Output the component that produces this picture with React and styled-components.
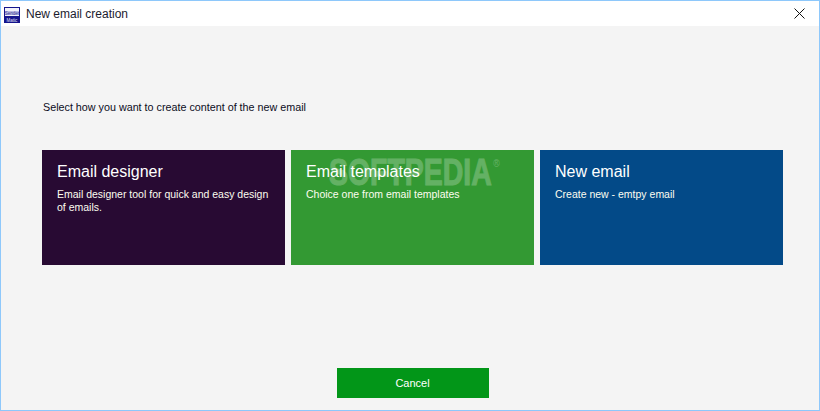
import React from 'react';
import styled, { createGlobalStyle } from 'styled-components';

const GlobalStyle = createGlobalStyle`
  html, body {
    margin: 0;
    padding: 0;
    height: 100%;
  }
  #root {
    height: 100%;
  }
  body {
    font-family: "Liberation Sans", Arial, sans-serif;
  }
`;

const Window = styled.div`
  position: relative;
  box-sizing: border-box;
  width: 820px;
  height: 411px;
  display: flex;
  flex-direction: column;
  border: 1px solid #8ec8fb;
  background: #f4f4f4;
  overflow: hidden;
`;

const TitleBar = styled.div`
  height: 25px;
  flex: none;
  display: flex;
  align-items: center;
  background: #fff;
  padding: 2px 8px 0 3px;
  box-sizing: border-box;
`;

const TitleText = styled.span`
  margin-left: 6px;
  margin-top: -2px;
  font-size: 12px;
  color: #1b1b2e;
`;

const CloseButton = styled.button`
  margin-left: auto;
  width: 24px;
  height: 24px;
  margin-top: -2px;
  padding: 0;
  border: 0;
  background: none;
  display: flex;
  align-items: center;
  justify-content: center;
`;

const Content = styled.main`
  flex: 1;
  display: flex;
  flex-direction: column;
  padding: 74px 36px 12px 41px;
`;

const Prompt = styled.p`
  margin: 0 0 0 1px;
  font-size: 10.75px;
  line-height: 14px;
  color: #0c0c1c;
`;

const Cards = styled.div`
  display: grid;
  grid-template-columns: repeat(3, 243px);
  gap: 6px;
  margin-top: 36px;
`;

const Card = styled.div`
  box-sizing: border-box;
  height: 115px;
  padding: 11px 8px 11px 15px;
  color: #fff;
  background: ${({ $color }) => $color};
`;

const CardTitle = styled.div`
  font-size: 16px;
  line-height: 22px;
`;

const CardText = styled.div`
  margin-top: 5px;
  font-size: 10.5px;
  line-height: 13px;
  color: #fdfdf0;
`;

const Footer = styled.div`
  margin-top: auto;
  display: flex;
  justify-content: center;
`;

const CancelButton = styled.button`
  width: 152px;
  height: 30px;
  padding: 0 0 1px;
  border: 0;
  background: #029618;
  color: #fff;
  font-family: inherit;
  font-size: 11px;
`;

const Watermark = styled.div`
  position: absolute;
  left: 328px;
  top: 152px;
  font-size: 36px;
  line-height: 40px;
  font-weight: 700;
  color: #fff;
  opacity: 0.24;
  -webkit-text-stroke: 1px #fff;
  pointer-events: none;
  white-space: nowrap;
  transform: scaleX(0.79);
  transform-origin: left top;
`;

const Registered = styled.sup`
  font-size: 11px;
  font-weight: 400;
  line-height: 0;
  vertical-align: 18px;
  margin-left: 2px;
  -webkit-text-stroke: 0;
`;

const LogoIcon = () => (
  <svg width="16" height="16" viewBox="0 0 16 16">
    <rect width="16" height="16" fill="#14148c" />
    <rect x="1" y="1" width="14" height="8" fill="#f2f2fa" />
    <rect x="1" y="4" width="14" height="4" fill="#b9b9e2" />
    <text x="8" y="7.5" textAnchor="middle" fontSize="4.5" fill="#3a3a98" fontFamily="Liberation Sans">Sender</text>
    <text x="8" y="14.5" textAnchor="middle" fontSize="4.5" fill="#e4e4f8" fontFamily="Liberation Sans">Matic</text>
  </svg>
);

const CloseIcon = () => (
  <svg width="11" height="11" viewBox="0 0 11 11">
    <path d="M0.5 0.5L10.5 10.5M10.5 0.5L0.5 10.5" stroke="#111" strokeWidth="1" fill="none" />
  </svg>
);

const cards = [
  { title: 'Email designer', text: 'Email designer tool for quick and easy design of emails.', color: '#280a33' },
  { title: 'Email templates', text: 'Choice one from email templates', color: '#339933' },
  { title: 'New email', text: 'Create new - emtpy email', color: '#034a88' },
];

const App = () => (
  <Window>
    <GlobalStyle />
    <TitleBar>
      <LogoIcon />
      <TitleText>New email creation</TitleText>
      <CloseButton aria-label="Close">
        <CloseIcon />
      </CloseButton>
    </TitleBar>
    <Content>
      <Prompt>Select how you want to create content of the new email</Prompt>
      <Cards>
        {cards.map(card => (
          <Card key={card.title} $color={card.color}>
            <CardTitle>{card.title}</CardTitle>
            <CardText>{card.text}</CardText>
          </Card>
        ))}
      </Cards>
      <Footer>
        <CancelButton>Cancel</CancelButton>
      </Footer>
    </Content>
    <Watermark>SOFTPEDIA<Registered>®</Registered></Watermark>
  </Window>
);

export default App;
